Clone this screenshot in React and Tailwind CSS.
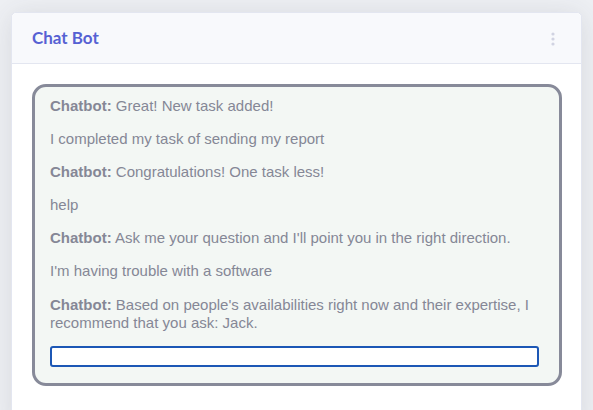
import React from "react";

const messages = [
  { bot: true, text: "Great! New task added!" },
  { bot: false, text: "I completed my task of sending my report" },
  { bot: true, text: "Congratulations! One task less!" },
  { bot: false, text: "help" },
  { bot: true, text: "Ask me your question and I'll point you in the right direction." },
  { bot: false, text: "I'm having trouble with a software" },
  { bot: true, text: "Based on people's availabilities right now and their expertise, I recommend that you ask: Jack." },
];

export default function App() {
  return (
    <div className="w-[593px] h-[410px] overflow-hidden bg-[#eef0f4] pt-[12px] pl-[11px]">
      <div className="w-[571px] h-[420px] bg-white border border-[#e3e6f0] rounded-[5px] shadow-[0_2px_28px_0_rgba(58,59,69,0.12)] flex flex-col">
        <div className="h-[51px] shrink-0 bg-[#f8f9fc] border-b border-[#e3e6f0] rounded-t-[5px] flex items-center justify-between pl-[20px] pr-[26px]">
          <span className="text-[17px] font-bold text-[#5661d3] font-['Lato',sans-serif] leading-none pb-[1px]">
            Chat Bot
          </span>
          <svg width="4" height="14" viewBox="0 0 4 14" className="mt-[2px]">
            <circle cx="2" cy="2" r="1.6" fill="#d1d3e2" />
            <circle cx="2" cy="7" r="1.6" fill="#d1d3e2" />
            <circle cx="2" cy="12" r="1.6" fill="#d1d3e2" />
          </svg>
        </div>
        <div className="p-[20px] pr-[19px]">
          <div className="w-[530px] border-[3px] border-[#878a99] rounded-[14px] bg-[#f3f7f4] pt-[9.5px] pb-[16px] pl-[15px] pr-[20px] font-['Liberation_Sans',Arial,sans-serif] text-[15px] leading-[18px] text-[#858796]">
            <div className="flex flex-col gap-[15.2px]">
              {messages.map((m, i) => (
                <p key={i}>
                  {m.bot && <b className="font-bold">Chatbot:</b>}
                  {m.bot ? " " : ""}
                  {m.text}
                </p>
              ))}
            </div>
            <div className="mt-[14.5px] h-[21px] w-[489px] bg-white border-2 border-[#1c57b5] rounded-[3px]" />
          </div>
        </div>
      </div>
    </div>
  );
}
